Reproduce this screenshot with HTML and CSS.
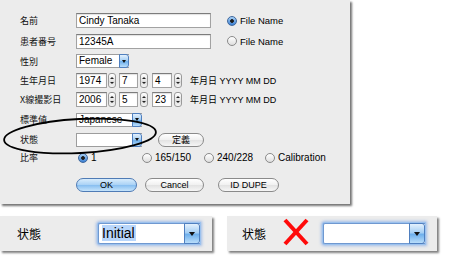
FILE: index.html
```html
<!DOCTYPE html>
<html lang="ja">
<head>
<meta charset="utf-8">
<link rel="stylesheet" href="styles.css">
</head>
<body>
<div class="page">
  <div class="dialog">
    <div class="row r1">
      <span class="lbl">名前</span>
      <span class="field w-name">Cindy Tanaka</span>
      <span class="radio on gap16"></span><span class="rtext">File Name</span>
    </div>
    <div class="row r2">
      <span class="lbl">患者番号</span>
      <span class="field w-name">12345A</span>
      <span class="radio gap16"></span><span class="rtext">File Name</span>
    </div>
    <div class="row r3">
      <span class="lbl">性別</span>
      <span class="sel w-sex"><span class="txt">Female</span><span class="arr"><i></i></span></span>
    </div>
    <div class="row r4">
      <span class="lbl">生年月日</span>
      <span class="field w-y">1974</span><span class="step s1"><i class="up"></i><i class="dn"></i></span>
      <span class="field w-m">7</span><span class="step s2"><i class="up"></i><i class="dn"></i></span>
      <span class="field w-d">4</span><span class="step s3"><i class="up"></i><i class="dn"></i></span>
      <span class="fmt">年月日 YYYY MM DD</span>
    </div>
    <div class="row r5">
      <span class="lbl">X線撮影日</span>
      <span class="field w-y">2006</span><span class="step s1"><i class="up"></i><i class="dn"></i></span>
      <span class="field w-m">5</span><span class="step s2"><i class="up"></i><i class="dn"></i></span>
      <span class="field w-d">23</span><span class="step s3"><i class="up"></i><i class="dn"></i></span>
      <span class="fmt">年月日 YYYY MM DD</span>
    </div>
    <div class="row r6">
      <span class="lbl">標準値</span>
      <span class="sel w-std"><span class="txt">Japanese</span><span class="arr"><i></i></span></span>
    </div>
    <div class="row r7">
      <span class="lbl">状態</span>
      <span class="sel w-std"><span class="txt"></span><span class="arr"><i></i></span></span>
      <span class="btn w-def cjk">定義</span>
    </div>
    <div class="row r8">
      <span class="lbl">比率</span>
      <span class="radio on ml2"></span><span class="rtext t1">1</span>
      <span class="radio"></span><span class="rtext t2">165/150</span>
      <span class="radio"></span><span class="rtext t3">240/228</span>
      <span class="radio"></span><span class="rtext">Calibration</span>
    </div>
    <div class="row r9">
      <span class="lbl"></span>
      <span class="btn def w-ok">OK</span>
      <span class="btn w-cancel">Cancel</span>
      <span class="btn w-id">ID DUPE</span>
    </div>
    <svg class="oval" width="164" height="46" viewBox="0 0 164 46">
      <ellipse cx="80" cy="22" rx="76" ry="17" fill="none" stroke="#000" stroke-width="1.8" transform="rotate(-3 80 22)"/>
    </svg>
  </div>
  <div class="bottom">
    <div class="panel p1">
      <span class="blbl">状態</span>
      <span class="bigsel"><span class="btxt"><span class="hl">Initial</span></span><span class="barr"><i></i></span></span>
    </div>
    <div class="panel p2">
      <span class="blbl b2">状態</span>
      <svg class="xmark" width="26" height="28" viewBox="0 0 26 28">
        <line x1="2" y1="2" x2="24" y2="26" stroke="#ff0a0a" stroke-width="4"/>
        <line x1="24" y1="2" x2="2" y2="26" stroke="#ff0a0a" stroke-width="4"/>
      </svg>
      <span class="bigsel"><span class="btxt"></span><span class="barr"><i></i></span></span>
    </div>
  </div>
</div>
</body>
</html>
```

FILE: styles.css
```css
* { box-sizing: border-box; }
body {
  margin: 0;
  background: #fff;
  font-family: "Liberation Sans", Arial, sans-serif;
  font-size: 9.5px;
  color: #000;
}
.page { width: 449px; height: 259px; }
.dialog {
  position: relative;
  width: 350px;
  height: 204px;
  background: #ececec;
  box-shadow: 2px 2px 2px rgba(0,0,0,.55);
  padding: 10px 0 0 20px;
}
.row { display: flex; align-items: center; }
.r1 { height: 21px; }
.r2 { height: 20px; }
.r3 { height: 20px; }
.r4 { height: 18px; }
.r5 { height: 20px; }
.r6 { height: 21px; }
.r7 { height: 19px; }
.r8 { height: 17px; }
.r9 { height: 18px; margin-top: 10px; }
.lbl {
  width: 56px;
  flex: none;
  font-family: "Noto Sans CJK JP", sans-serif;
  font-size: 9px;
  color: #111;
}
.cjk { font-family: "Noto Sans CJK JP", sans-serif; }
.field {
  flex: none;
  height: 15px;
  background: #fff;
  border: 1px solid #a2a2a2;
  border-top-color: #7c7c7c;
  box-shadow: inset 0 1px 1px rgba(0,0,0,.12);
  padding: 0 2px;
  font-size: 10px;
  line-height: 13px;
  white-space: nowrap;
  overflow: hidden;
}
.w-name { width: 135px; }
.w-y { width: 31px; }
.w-m { width: 19px; margin-left: 3px; }
.w-d { width: 20px; margin-left: 4px; }
.step {
  flex: none;
  width: 8px;
  height: 15px;
  margin-left: 1px;
  border: 1px solid #9a9a9a;
  border-radius: 3px;
  background: linear-gradient(#fff, #e6e6e6 50%, #d8d8d8 51%, #f4f4f4);
  display: flex;
  flex-direction: column;
  align-items: center;
  justify-content: space-evenly;
}
.s2, .s3 { margin-left: 2px; }
.step i { width: 0; height: 0; border-left: 2px solid transparent; border-right: 2px solid transparent; }
.step .up { border-bottom: 2px solid #222; }
.step .dn { border-top: 2px solid #222; }
.fmt {
  margin-left: 8px;
  font-family: "Liberation Sans", "Noto Sans CJK JP", sans-serif;
  font-size: 9px;
  white-space: nowrap;
}
.sel {
  flex: none;
  display: flex;
  height: 14px;
  background: #fff;
  border: 1px solid #9d9d9d;
  border-right: none;
}
.w-sex { width: 53px; }
.w-std { width: 66px; }
.sel .txt { flex: 1; padding-left: 2px; font-size: 10px; line-height: 12px; overflow: hidden; white-space: nowrap; }
.sel .arr, .bigsel .barr {
  flex: none;
  width: 10px;
  margin: -1px 0;
  border: 1px solid #4f7fbf;
  border-radius: 0 3px 3px 0;
  background: linear-gradient(#e4f1fd, #a6cff4 45%, #6fb0ec 55%, #b9ddfa);
  display: flex;
  align-items: center;
  justify-content: center;
}
.arr i, .barr i {
  width: 0; height: 0;
  border-left: 2px solid transparent;
  border-right: 2px solid transparent;
  border-top: 3px solid #111;
}
.radio {
  flex: none;
  width: 10px;
  height: 10px;
  border-radius: 50%;
  border: 1px solid #8a8a8a;
  background: linear-gradient(#fff, #dedede);
}
.radio.on {
  border-color: #3f679c;
  background: radial-gradient(circle, #1c1c1c 0 1.5px, transparent 2.2px), linear-gradient(#a9d2f7, #3b7fd2);
}
.gap16 { margin-left: 16px; }
.ml2 { margin-left: 2px; }
.rtext { margin-left: 3px; white-space: nowrap; }
.r8 .rtext { font-size: 10px; }
.t1 { width: 51px; }
.t2 { width: 49px; }
.t3 { width: 48px; }
.btn {
  flex: none;
  height: 14px;
  border-radius: 7px;
  border: 1px solid #8a8a8a;
  background: linear-gradient(#fff, #f0f0f0 50%, #e2e2e2 51%, #f6f6f6);
  display: flex;
  align-items: center;
  justify-content: center;
  font-size: 9px;
}
.btn.def {
  border-color: #4f7bb5;
  background: linear-gradient(#d8ecfc, #a9d1f5 50%, #86bdf0 51%, #c6e4fb);
}
.w-def { width: 46px; margin-left: 16px; }
.w-ok { width: 61px; }
.w-cancel { width: 59px; margin-left: 8px; }
.w-id { width: 61px; margin-left: 14px; }
.oval { position: absolute; left: 0; top: 114px; }
.bottom { display: flex; margin-top: 12px; gap: 15px; }
.panel {
  height: 35px;
  background: #ececec;
  box-shadow: 2px 2px 2px rgba(0,0,0,.5);
  display: flex;
  align-items: center;
}
.p1 { width: 212px; padding-left: 17px; }
.p2 { width: 210px; padding-left: 15px; }
.blbl { font-family: "Noto Sans CJK JP", sans-serif; font-size: 12px; width: 81px; flex: none; }
.b2 { width: 41px; }
.xmark { flex: none; margin-top: -3px; }
.p2 .bigsel { margin-left: 14px; }
.bigsel {
  flex: none;
  display: flex;
  width: 102px;
  height: 21px;
  background: #fff;
  border: 1px solid #6f98d0;
  border-right: none;
  border-radius: 2px 0 0 2px;
  box-shadow: 0 0 0 1px #9cc2ee, 0 0 3px 2px rgba(100,150,225,.55);
}
.bigsel .btxt { flex: 1; padding: 1px 0 0 3px; font-size: 14px; line-height: 17px; }
.hl { background: #b8d6fb; padding-right: 1px; }
.bigsel .barr { width: 16px; }
.barr i { border-left-width: 3px; border-right-width: 3px; border-top-width: 4px; }
```
